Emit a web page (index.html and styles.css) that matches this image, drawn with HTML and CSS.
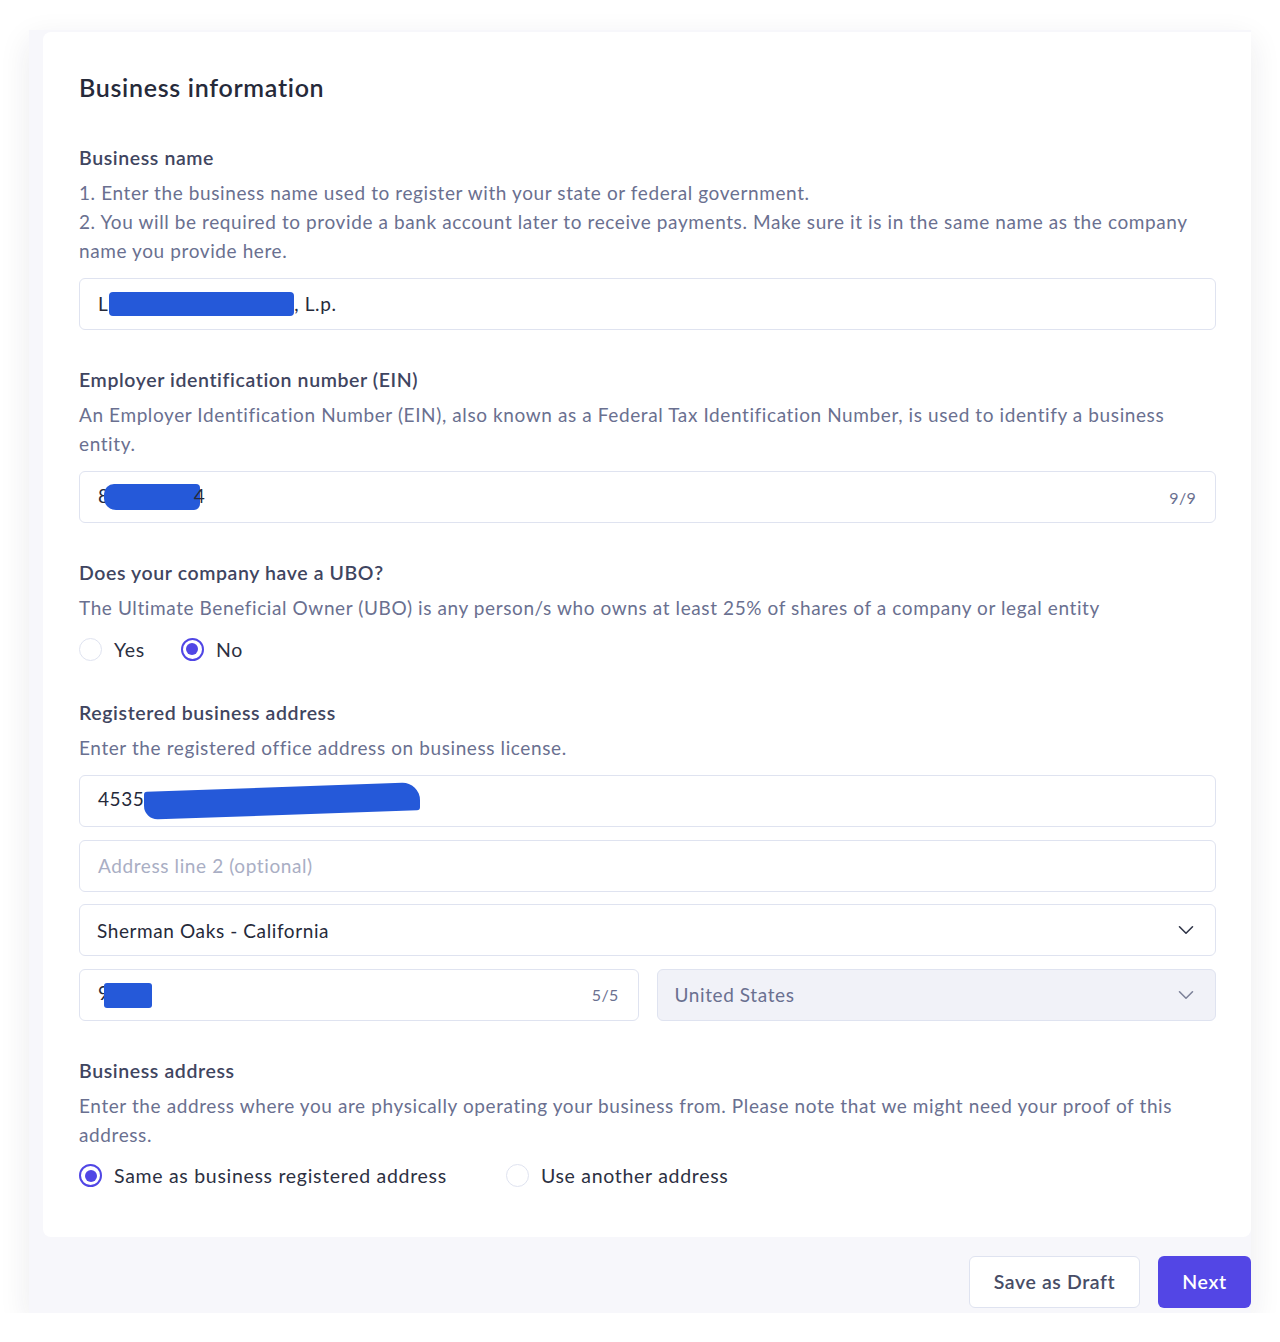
FILE: index.html
```html
<!DOCTYPE html>
<html lang="en">
  <head>
    <meta charset="UTF-8" />
    <meta name="viewport" content="width=device-width, initial-scale=1.0" />
    <title>Business information</title>

    <link rel="stylesheet" href="styles.css">
  </head>

  <body>
    <div class="panel">
      <div class="card">
        <h1>Business information</h1>

        <div class="section">
          <div class="label">Business name</div>
          <p class="desc">1. Enter the business name used to register with your state or federal government.<br />2. You will be required to provide a bank account later to receive payments. Make sure it is in the same name as the company name you provide here.</p>
          <div class="field">
            <span class="value">L<span class="blot blot-name"></span>, L.p.</span>
          </div>
        </div>

        <div class="section">
          <div class="label">Employer identification number (EIN)</div>
          <p class="desc">An Employer Identification Number (EIN), also known as a Federal Tax Identification Number, is used to identify a business entity.</p>
          <div class="field">
            <span class="value">8<span class="blot blot-ein"></span>4</span>
            <span class="count">9/9</span>
          </div>
        </div>

        <div class="section">
          <div class="label">Does your company have a UBO?</div>
          <p class="desc">The Ultimate Beneficial Owner (UBO) is any person/s who owns at least 25% of shares of a company or legal entity</p>
          <div class="radios radios-ubo">
            <label class="radio"><span class="dot"></span>Yes</label>
            <label class="radio checked"><span class="dot"></span>No</label>
          </div>
        </div>

        <div class="section">
          <div class="label">Registered business address</div>
          <p class="desc">Enter the registered office address on business license.</p>
          <div class="stack">
            <div class="field">
              <span class="value">4535<span class="blot blot-addr"></span></span>
            </div>
            <div class="field">
              <span class="placeholder">Address line 2 (optional)</span>
            </div>
            <div class="field select">
              <span class="value">Sherman Oaks - California</span>
              <svg class="chevron" width="16" height="10" viewBox="0 0 16 10"><path d="M1.5 1.8 8 8.2l6.5-6.4" fill="none" stroke="currentColor" stroke-width="1.6" stroke-linecap="round" stroke-linejoin="round"/></svg>
            </div>
            <div class="row">
              <div class="field">
                <span class="value">9<span class="blot blot-zip"></span></span>
                <span class="count">5/5</span>
              </div>
              <div class="field select disabled">
                <span class="value">United States</span>
                <svg class="chevron" width="16" height="10" viewBox="0 0 16 10"><path d="M1.5 1.8 8 8.2l6.5-6.4" fill="none" stroke="currentColor" stroke-width="1.6" stroke-linecap="round" stroke-linejoin="round"/></svg>
              </div>
            </div>
          </div>
        </div>

        <div class="section">
          <div class="label">Business address</div>
          <p class="desc">Enter the address where you are physically operating your business from. Please note that we might need your proof of this address.</p>
          <div class="radios radios-addr">
            <label class="radio checked"><span class="dot"></span>Same as business registered address</label>
            <label class="radio"><span class="dot"></span>Use another address</label>
          </div>
        </div>
      </div>

      <div class="footer">
        <button class="btn btn-draft">Save as Draft</button>
        <button class="btn btn-next">Next</button>
      </div>
    </div>
  </body>
</html>
```

FILE: styles.css
```css
body {
  font-family: Lato, "Noto Sans", sans-serif;
  margin: 0;
  padding: 30px 29px 0 29px;
  background-color: #fff;
  color: #262a3a;
  letter-spacing: 0.6px;
}

.panel {
  background: #f7f7fb;
  padding: 2px 0 0 14px;
  box-shadow: 0 10px 30px rgba(30, 34, 60, 0.09);
}

.card {
  background: #fff;
  border-radius: 8px 0 8px 8px;
  padding: 39px 35px 47px 36px;
}

.card h1 {
  margin: 0 0 40px;
  font-size: 25px;
  line-height: 32px;
  font-weight: 600;
  color: #262a3a;
  letter-spacing: 0.7px;
}

.section {
  margin-bottom: 35px;
}

.section:last-child {
  margin-bottom: 0;
}

.label {
  font-size: 19.5px;
  line-height: 29px;
  font-weight: 600;
  color: #3f4560;
  margin-bottom: 6px;
}

.desc {
  margin: 0 0 13px;
  font-size: 19px;
  line-height: 29px;
  color: #6a7090;
}

.stack {
  display: flex;
  flex-direction: column;
  gap: 12.5px;
}

.row {
  display: grid;
  grid-template-columns: 1fr 1fr;
  gap: 18px;
}

.field {
  display: flex;
  align-items: center;
  height: 52px;
  box-sizing: border-box;
  padding: 0 19px 0 18px;
  border: 1.5px solid #dfe3f0;
  border-radius: 6px;
  background: #fff;
  font-size: 19px;
}

.field .value {
  flex: 1;
  color: #262a3a;
  white-space: nowrap;
}

.field .placeholder {
  color: #a9aec4;
}

.field .count {
  font-size: 16px;
  letter-spacing: 0.3px;
  color: #6a7090;
}

.select {
  padding-left: 17px;
  padding-right: 21px;
}

.select .chevron {
  color: #2f3447;
}

.select.disabled {
  background: #f1f2f8;
}

.select.disabled .value {
  color: #6a7090;
}

.select.disabled .chevron {
  color: #7d8299;
}

.blot {
  display: inline-block;
  vertical-align: middle;
  background: #2559d9;
  border-radius: 4px;
}

.blot-name {
  width: 185px;
  height: 24px;
  margin: -4px 0 0 1px;
}

.blot-ein {
  width: 96px;
  height: 26px;
  margin: -2px -6px 0 -6px;
  border-radius: 10px 4px 6px 12px;
}

.blot-addr {
  width: 276px;
  height: 28px;
  margin: -2px 0 0 0;
  border-radius: 3px 18px 3px 14px;
  transform: skewY(-2deg);
}

.blot-zip {
  width: 48px;
  height: 25px;
  margin: 2px 0 0 -6px;
  border-radius: 3px;
}

.radios {
  display: flex;
  align-items: center;
  height: 28px;
}

.radios-ubo {
  gap: 36px;
}

.radios-addr {
  gap: 59px;
}

.radio {
  display: flex;
  align-items: center;
  font-size: 19.5px;
  letter-spacing: 0.7px;
  color: #2c3042;
  cursor: pointer;
}

.radio .dot {
  width: 23px;
  height: 23px;
  box-sizing: border-box;
  border: 1.5px solid #dfe3f0;
  border-radius: 50%;
  margin-right: 12px;
  display: flex;
  align-items: center;
  justify-content: center;
}

.radio.checked .dot {
  border: 2px solid #5046e5;
}

.radio.checked .dot::after {
  content: "";
  width: 12px;
  height: 12px;
  border-radius: 50%;
  background: #5046e5;
}

.footer {
  display: flex;
  justify-content: flex-end;
  align-items: flex-start;
  gap: 18px;
  height: 76px;
  box-sizing: border-box;
  padding-top: 19px;
}

.btn {
  height: 52px;
  border-radius: 6px;
  font-family: Lato, "Noto Sans", sans-serif;
  font-size: 19.5px;
  font-weight: 600;
  letter-spacing: 0.6px;
  cursor: pointer;
}

.btn-draft {
  width: 171px;
  background: #fff;
  border: 1.5px solid #dfe3f0;
  color: #474d66;
}

.btn-next {
  width: 93px;
  background: #5346e5;
  border: none;
  color: #fff;
}

.btn-next:hover {
  background: #4338d6;
}
```
